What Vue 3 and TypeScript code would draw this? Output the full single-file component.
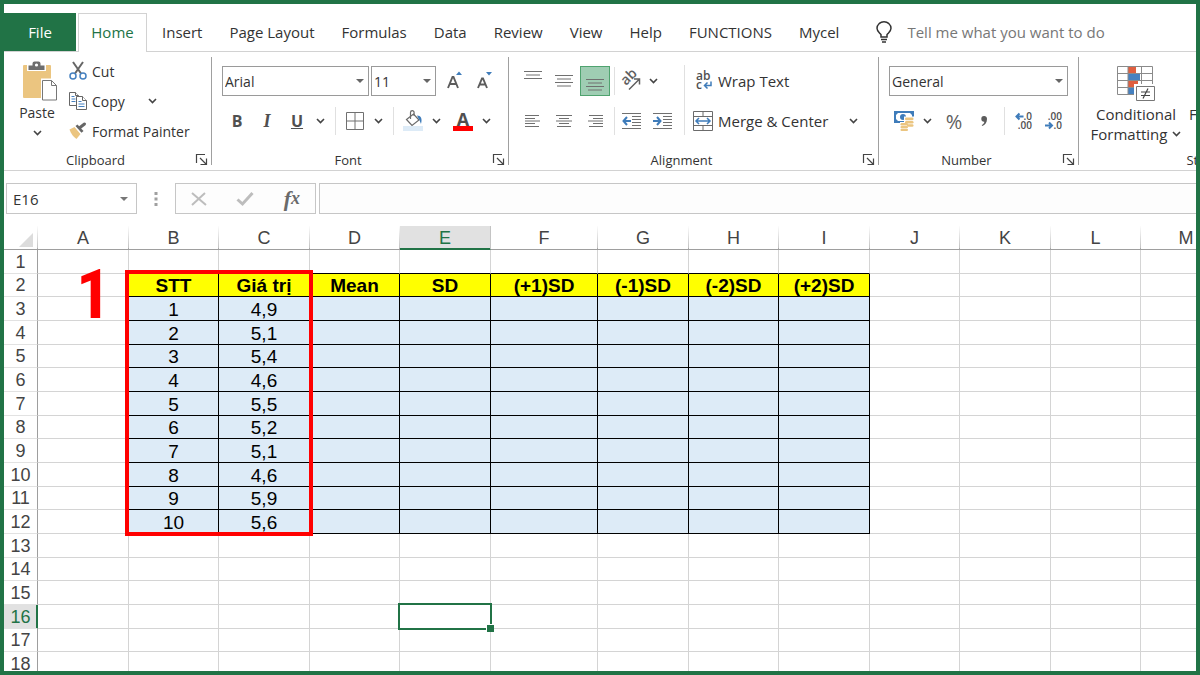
<script setup lang="ts">
import { ref } from 'vue'

const tabs = ['Insert', 'Page Layout', 'Formulas', 'Data', 'Review', 'View', 'Help', 'FUNCTIONS', 'Mycel']
const columns = ['A', 'B', 'C', 'D', 'E', 'F', 'G', 'H', 'I', 'J', 'K', 'L', 'M']
const wideColumns = ['A', 'C', 'E', 'G', 'I', 'K', 'M']
const rowCount = 18
const activeColumn = 'E'
const activeRow = 16

const headings: Record<string, string> = {
  B: 'STT', C: 'Giá trị', D: 'Mean', E: 'SD', F: '(+1)SD', G: '(-1)SD', H: '(-2)SD', I: '(+2)SD',
}
const values = ['4,9', '5,1', '5,4', '4,6', '5,5', '5,2', '5,1', '4,6', '5,9', '5,6']

const fontName = ref('Arial')
const fontSize = ref('11')
const numberFormat = ref('General')
const cellName = ref('E16')
const formula = ref('')
const query = ref('')

function inTable(col: string, row: number): boolean {
  return col in headings && row >= 2 && row <= 12
}
function cellText(col: string, row: number): string {
  if (!inTable(col, row)) return ''
  if (row === 2) return headings[col]
  if (col === 'B') return String(row - 2)
  if (col === 'C') return values[row - 3]
  return ''
}
function cellClass(col: string, row: number) {
  return {
    heading: inTable(col, row) && row === 2,
    data: inTable(col, row) && row > 2,
    'above-table': row === 1 && col in headings,
    'beside-table': col === 'A' && row >= 2 && row <= 12,
    selected: col === activeColumn && row === activeRow,
  }
}
function colClass(col: string): string {
  if (col === 'F') return 'col-f'
  return wideColumns.includes(col) ? 'col-wide' : 'col'
}
</script>

<template>
  <div class="window">
    <nav class="tabs" aria-label="Ribbon tabs">
      <button class="tab file">File</button>
      <button class="tab home">Home</button>
      <button v-for="t in tabs" :key="t" class="tab">{{ t }}</button>
      <label class="tell">
        <svg width="18" height="22" viewBox="0 0 18 22" fill="none" stroke="#333" stroke-width="1.5">
          <path d="M6 16v-2.4C4.600 11.800 2 10.500 2 7.300a7 6.500 0 0 1 14 0c0 3.200-2.600 4.500-4 6.300V16z" />
          <path d="M6 18.500h6M7 21h4" />
        </svg>
        <input v-model="query" type="text" placeholder="Tell me what you want to do" aria-label="Tell me what you want to do" />
      </label>
    </nav>

    <div class="ribbon">
      <section class="group clipboard">
        <div class="body">
          <button class="paste">
            <svg width="36" height="40" viewBox="0 0 36 40">
              <rect x="1" y="4" width="28" height="33" rx="1" fill="#ebc580" />
              <path d="M5 3.500h5a4.500 4.500 0 0 1 9 0h5V10H5z" fill="#fff" />
              <path d="M6.500 4.500H10.500V2.500a2 2 0 0 1 2-2h4a2 2 0 0 1 2 2v2h4v4.500h-16z" fill="#6d6d6d" />
              <circle cx="14.500" cy="4" r="1.600" fill="#fff" />
              <path d="M19 17.500h12l5 5V40H19z" fill="#fff" />
              <path d="M20.500 19.500h9l5 5V39h-14z" fill="#fff" stroke="#777" />
              <path d="M29.500 19.500v5h5" fill="none" stroke="#777" />
            </svg>
            <span>Paste</span>
            <svg class="chev-icon" width="9" height="6" viewBox="0 0 9 6"><path d="M1 1l3.500 3.500L8 1" /></svg>
          </button>
          <div class="clip-actions">
            <button class="action">
              <svg width="18" height="20" viewBox="0 0 18 20" fill="none">
                <path d="M4 1l8 11.500M14 1l-8 11.500" stroke="#666" stroke-width="2" />
                <circle cx="4" cy="15" r="3" stroke="#4681c0" stroke-width="1.500" />
                <circle cx="14" cy="15" r="3" stroke="#4681c0" stroke-width="1.500" />
              </svg>
              Cut
            </button>
            <div class="action-row">
              <button class="action">
                <svg width="18" height="20" viewBox="0 0 18 20" fill="#fff" stroke="#666">
                  <path d="M.5 1.500h6l3 3v10h-9z" /><path d="M6.500 1.500v3h3" />
                  <path d="M2.500 5.500h3M2.500 8h4M2.500 10.500h4" stroke="#4681c0" />
                  <path d="M7.500 5.500h6l4 4v9h-10z" /><path d="M13.500 5.500v4h4" />
                  <path d="M9.500 10.500h3M9.500 13h6M9.500 15.500h6" stroke="#4681c0" />
                </svg>
                Copy
              </button>
              <button class="chev" aria-label="Copy options"><svg class="chev-icon" width="9" height="6" viewBox="0 0 9 6"><path d="M1 1l3.500 3.500L8 1" /></svg></button>
            </div>
            <button class="action">
              <svg width="18" height="20" viewBox="0 0 18 20">
                <path d="M.5 8.500l5-2.500 6 7-4 5c-3-2-5.500-5-7-9.500z" fill="#ebc580" />
                <path d="M6.500 5l2-1.500 6 6.500-2 1.800z" fill="#666" />
                <path d="M11 6.500L15.500 3" stroke="#666" stroke-width="3" stroke-linecap="round" />
                <path d="M6 5.800l6 6.800" stroke="#fff" stroke-width=".8" />
              </svg>
              Format Painter
            </button>
          </div>
        </div>
        <footer><span>Clipboard</span><button class="launch" aria-label="Clipboard settings"><svg width="12" height="12" viewBox="0 0 12 12"><path d="M.5 9V.5H9M4 4l6 6M10.500 4.500v6h-6" /></svg></button></footer>
      </section>

      <section class="group font">
        <div class="body rows">
          <div class="row">
            <span class="select-wrap name">
              <select v-model="fontName" aria-label="Font"><option>Arial</option></select>
              <svg width="8" height="4" viewBox="0 0 8 4"><path d="M0 0h8L4 4z" /></svg>
            </span>
            <span class="select-wrap size">
              <select v-model="fontSize" aria-label="Font size"><option>11</option></select>
              <svg width="8" height="4" viewBox="0 0 8 4"><path d="M0 0h8L4 4z" /></svg>
            </span>
            <button class="tool" aria-label="Increase font size">
              <svg width="18" height="20" viewBox="0 0 18 20"><path d="M3 17l4.500-11h1L13 17M4.800 13h6.400" fill="none" stroke="#5c5c5c" stroke-width="1.900" /><path d="M11 4h6l-3-3.500z" fill="#3f7cba" /></svg>
            </button>
            <button class="tool" aria-label="Decrease font size">
              <svg width="18" height="20" viewBox="0 0 18 20"><path d="M3 17l4-9.500h1L12 17M4.600 13.500h5.800" fill="none" stroke="#5c5c5c" stroke-width="1.900" /><path d="M11 1h6l-3 3.500z" fill="#3f7cba" /></svg>
            </button>
          </div>
          <div class="row">
            <button class="tool bold">B</button>
            <button class="tool italic">I</button>
            <button class="tool under">U</button>
            <button class="chev" aria-label="Underline options"><svg class="chev-icon" width="9" height="6" viewBox="0 0 9 6"><path d="M1 1l3.500 3.500L8 1" /></svg></button>
            <i class="sep"></i>
            <button class="tool" aria-label="Borders">
              <svg width="18" height="18" viewBox="0 0 18 18" fill="none" stroke="#707070"><path d="M.5.5h17v17H.5zM9 .5v17M.5 9h17" /></svg>
            </button>
            <button class="chev" aria-label="Border options"><svg class="chev-icon" width="9" height="6" viewBox="0 0 9 6"><path d="M1 1l3.500 3.500L8 1" /></svg></button>
            <i class="sep"></i>
            <button class="tool" aria-label="Fill color">
              <svg width="20" height="22" viewBox="0 0 20 22" fill="none" stroke="#6b6b6b">
                <path d="M3.500 9.500L10.500 4l5.500 6-7 5.500z" stroke-width="1.200" />
                <path d="M7.500 9V2.500a1.800 1.800 0 0 1 3.600 0V6" stroke-width="1.200" />
                <path d="M14 5.500c4 0 5.500 3 4 8.500-1-2-1-3.500-2-4.500z" fill="#3f7cba" stroke="none" />
                <path d="M0 16h20v5H0z" fill="#ddebf7" stroke="none" />
              </svg>
            </button>
            <button class="chev" aria-label="Fill options"><svg class="chev-icon" width="9" height="6" viewBox="0 0 9 6"><path d="M1 1l3.500 3.500L8 1" /></svg></button>
            <button class="tool color" aria-label="Font color"><span>A</span></button>
            <button class="chev" aria-label="Font color options"><svg class="chev-icon" width="9" height="6" viewBox="0 0 9 6"><path d="M1 1l3.500 3.500L8 1" /></svg></button>
          </div>
        </div>
        <footer><span>Font</span><button class="launch" aria-label="Font settings"><svg width="12" height="12" viewBox="0 0 12 12"><path d="M.5 9V.5H9M4 4l6 6M10.500 4.500v6h-6" /></svg></button></footer>
      </section>

      <section class="group alignment">
        <div class="body">
          <div class="rows">
            <div class="row aligns">
              <button class="tool" aria-label="Top align"><svg class="lines" width="18" height="20" viewBox="0 0 18 20"><path d="M0 .5h18M2 4h14M0 7.500h18" /></svg></button>
              <button class="tool" aria-label="Middle align"><svg class="lines" width="18" height="20" viewBox="0 0 18 20"><path d="M0 4.500h18M2 8h14M0 11.500h18M2 15h14" /></svg></button>
              <button class="tool on" aria-label="Bottom align"><svg class="lines" width="18" height="20" viewBox="0 0 18 20"><path d="M0 8.500h18M2 12h14M0 15.500h18M2 19h14" /></svg></button>
              <i class="sep thin"></i>
              <button class="tool orient" aria-label="Orientation">
                <svg width="22" height="20" viewBox="0 0 22 20" fill="none" stroke="#606060" stroke-width="1.500">
                  <text x="0" y="0" transform="translate(7 15) rotate(-45)" class="ab">ab</text>
                  <path d="M10 18.500L20 8.500M15 8h5.500v5.500" />
                </svg>
              </button>
              <button class="chev" aria-label="Orientation options"><svg class="chev-icon" width="9" height="6" viewBox="0 0 9 6"><path d="M1 1l3.500 3.500L8 1" /></svg></button>
            </div>
            <div class="row aligns">
              <button class="tool" aria-label="Align left"><svg class="lines" width="16" height="12" viewBox="0 0 16 12"><path d="M0 .5h14M0 3.500h10M0 6h15M0 8.500h10M0 11.500h14" /></svg></button>
              <button class="tool" aria-label="Center"><svg class="lines" width="16" height="12" viewBox="0 0 16 12"><path d="M0 .5h16M3 3.500h10M0 6h16M3 8.500h10M1 11.500h14" /></svg></button>
              <button class="tool" aria-label="Align right"><svg class="lines" width="16" height="12" viewBox="0 0 16 12"><path d="M2 .5h14M6 3.500h10M1 6h15M6 8.500h10M2 11.500h14" /></svg></button>
              <i class="sep thin"></i>
              <button class="tool" aria-label="Decrease indent">
                <svg class="lines" width="19" height="18" viewBox="0 0 19 18"><path d="M0 1.500h19M10 4.500h9M10 7.500h9M10 10.500h9M10 13.500h9M0 16.500h19" /><path class="blue" d="M9 9H1.500M5 5L1.500 9 5 13" /></svg>
              </button>
              <button class="tool" aria-label="Increase indent">
                <svg class="lines" width="19" height="18" viewBox="0 0 19 18"><path d="M0 1.500h19M10 4.500h9M10 7.500h9M10 10.500h9M10 13.500h9M0 16.500h19" /><path class="blue" d="M0 9h7.500M4 5l3.500 4L4 13" /></svg>
              </button>
            </div>
          </div>
          <i class="sep tall"></i>
          <div class="rows">
            <button class="action wide">
              <svg width="20" height="20" viewBox="0 0 20 20">
                <text x="3" y="9" class="glyph">ab</text><text x="3" y="18" class="glyph">c</text>
                <path d="M18 10.500v4h-6M14.500 11.500l-3 3 3 3" fill="none" stroke="#3f7cba" stroke-width="1.500" />
              </svg>
              Wrap Text
            </button>
            <div class="row">
              <button class="action wide merge">
                <svg width="20" height="20" viewBox="0 0 20 20" fill="none" stroke="#6b6b6b">
                  <path d="M.5.500h19v19H.5zM.5 5.500h19M.5 14.500h19M10 .5v5M10 14.500v5" />
                  <path d="M3 10h14M6 7l-3 3 3 3M14 7l3 3-3 3" stroke="#3f7cba" stroke-width="1.500" />
                </svg>
                Merge &amp; Center
              </button>
              <button class="chev" aria-label="Merge options"><svg class="chev-icon" width="9" height="6" viewBox="0 0 9 6"><path d="M1 1l3.500 3.500L8 1" /></svg></button>
            </div>
          </div>
        </div>
        <footer><span>Alignment</span><button class="launch" aria-label="Alignment settings"><svg width="12" height="12" viewBox="0 0 12 12"><path d="M.5 9V.5H9M4 4l6 6M10.500 4.500v6h-6" /></svg></button></footer>
      </section>

      <section class="group number">
        <div class="body rows">
          <span class="select-wrap format">
            <select v-model="numberFormat" aria-label="Number format"><option>General</option></select>
            <svg width="8" height="4" viewBox="0 0 8 4"><path d="M0 0h8L4 4z" /></svg>
          </span>
          <div class="row">
            <button class="tool" aria-label="Accounting format">
              <svg width="20" height="20" viewBox="0 0 20 20">
                <path d="M0 0h20v12H0z" fill="#3f7cba" />
                <path d="M4 2h12l2 2v4l-2 2H4L2 8V4z" fill="#fff" />
                <circle cx="9" cy="6" r="3" fill="#3f7cba" />
                <path d="M10 5.500h10V20H6v-9h4z" fill="#fff" />
                <g fill="#ebc580">
                  <rect x="11" y="6.500" width="8.500" height="2.800" rx="1.300" /><rect x="11" y="10" width="8.500" height="2.500" rx="1.200" /><rect x="13" y="13.200" width="6.500" height="2.500" rx="1.200" />
                  <rect x="6.500" y="12" width="7.500" height="2.500" rx="1.200" /><rect x="6.500" y="15" width="7.500" height="2.300" rx="1.100" /><rect x="6.500" y="17.700" width="7.500" height="2.300" rx="1.100" />
                </g>
              </svg>
            </button>
            <button class="chev" aria-label="Accounting options"><svg class="chev-icon" width="9" height="6" viewBox="0 0 9 6"><path d="M1 1l3.500 3.500L8 1" /></svg></button>
            <button class="tool percent">%</button>
            <button class="tool comma" aria-label="Comma style">
              <svg width="8" height="12" viewBox="0 0 8 12"><path d="M4 1a2.800 2.800 0 0 1 3 3c0 3.500-2 6-4.700 7l-.6-1c1.700-.8 2.600-2 2.600-3.300A2.800 2.800 0 1 1 4 1z" fill="#5c5c5c" /></svg>
            </button>
            <i class="sep thin"></i>
            <button class="tool" aria-label="Increase decimal">
              <svg width="18" height="20" viewBox="0 0 18 20"><text x="17" y="9" class="dec">.0</text><text x="17" y="18" class="dec">.00</text><path d="M8.500 5.500h-7M4.500 2.500l-3 3 3 3" class="blue" /></svg>
            </button>
            <button class="tool" aria-label="Decrease decimal">
              <svg width="18" height="20" viewBox="0 0 18 20"><text x="17" y="9" class="dec">.00</text><text x="17" y="18" class="dec">.0</text><path d="M0 14.500h7M4 11.500l3 3-3 3" class="blue" /></svg>
            </button>
          </div>
        </div>
        <footer><span>Number</span><button class="launch" aria-label="Number settings"><svg width="12" height="12" viewBox="0 0 12 12"><path d="M.5 9V.5H9M4 4l6 6M10.500 4.500v6h-6" /></svg></button></footer>
      </section>

      <section class="group styles">
        <div class="body">
          <button class="style-btn">
            <svg width="39" height="36" viewBox="0 0 39 36">
              <path d="M.5.500h35v28H.5z" fill="#fff" />
              <path d="M11 0h8v7h-8zM11 14h10v7H11z" fill="#df5f3f" />
              <path d="M11 7h12v7H11zM11 21h6v8h-6z" fill="#4681c0" />
              <path d="M.5.500h35v28H.5zM11 .5v28M24.500.5v28M.5 7.500h35M.5 14.500h35M.5 21.500h35" fill="none" stroke="#8a8a8a" />
              <path d="M17 18h22v18H17z" fill="#fff" />
              <path d="M19.500 20.500h18v14h-18z" fill="#fff" stroke="#777" />
              <path d="M24 26h9M24 29.500h9M31 22.500l-5 10" fill="none" stroke="#444" stroke-width="1.200" />
            </svg>
            <span>Conditional</span>
            <span>Formatting <svg class="chev-icon" width="9" height="6" viewBox="0 0 9 6"><path d="M1 1l3.500 3.500L8 1" /></svg></span>
          </button>
          <button class="style-btn second"><span>Format as</span><span>Table</span></button>
        </div>
        <footer><span>Styles</span></footer>
      </section>
    </div>

    <div class="formula-bar">
      <div class="name-box">
        <input v-model="cellName" type="text" aria-label="Name box" />
        <button aria-label="Show names"><svg width="8" height="4" viewBox="0 0 8 4"><path d="M0 0h8L4 4z" /></svg></button>
      </div>
      <svg class="dots" width="4" height="14" viewBox="0 0 4 14"><path d="M.5 0h3v3h-3zM.5 5.500h3v3h-3zM.5 11h3v3h-3z" fill="#a0a0a0" /></svg>
      <div class="fx-box">
        <button aria-label="Cancel"><svg width="16" height="14" viewBox="0 0 16 14" fill="none" stroke="#bdbdbd" stroke-width="2"><path d="M1 1l14 12M14 1L1 13" /></svg></button>
        <button aria-label="Enter"><svg width="18" height="14" viewBox="0 0 18 14" fill="none" stroke="#bdbdbd" stroke-width="3"><path d="M1.500 7.500l5 4.500L16.500 1" /></svg></button>
        <button class="fx" aria-label="Insert function">f<small>x</small></button>
      </div>
      <input v-model="formula" class="formula" type="text" aria-label="Formula" />
    </div>

    <main class="sheet">
      <table>
        <colgroup>
          <col class="col-head" />
          <col v-for="c in columns" :key="c" :class="colClass(c)" />
        </colgroup>
        <thead>
          <tr>
            <th class="corner"><svg width="14" height="14" viewBox="0 0 14 14"><path d="M14 0v14H0z" fill="#dcdcdc" /></svg></th>
            <th v-for="c in columns" :key="c" scope="col" :class="{ active: c === activeColumn }">{{ c }}</th>
          </tr>
        </thead>
        <tbody>
          <tr v-for="r in rowCount" :key="r">
            <th scope="row" :class="{ active: r === activeRow }">{{ r }}</th>
            <td v-for="c in columns" :key="c" :class="cellClass(c, r)">{{ cellText(c, r) }}</td>
          </tr>
        </tbody>
      </table>
      <div class="callout-box"></div>
      <strong class="callout-number">1</strong>
    </main>
  </div>
</template>

<style>
body { margin: 0; }
</style>

<style scoped>
* { box-sizing: border-box; }
.window {
  display: flex; flex-direction: column; height: 100vh; overflow: hidden;
  border: 4px solid #217346; background: #fff; color: #333;
  font-family: "Open Sans", "Noto Sans", sans-serif; font-size: 15px;
}
button, input, select { font: inherit; color: inherit; margin: 0; padding: 0; border: 0; background: none; border-radius: 0; }
button { display: flex; align-items: center; justify-content: center; white-space: nowrap; flex: none; }
svg { display: block; flex: none; overflow: visible; }
.chev-icon { fill: none; stroke: #444; stroke-width: 1.6; }

.tabs { display: flex; flex: none; gap: 1px; height: 48px; padding-top: 9px; border-bottom: 1px solid #d2d2d2; }
.tab { padding: 0 13px 1px; }
.file { width: 72px; background: #217346; color: #fff; }
.home { width: 69px; height: 39px; margin: 0 1px; border: 1px solid #d2d2d2; border-bottom: 0; padding-bottom: 2px; background: #fff; color: #217346; }
.tell { display: flex; align-items: center; flex: 1; gap: 14px; padding-left: 22px; }
.tell input { flex: 1; min-width: 0; outline: 0; }
.tell input::placeholder { color: #777; opacity: 1; }

.ribbon { display: flex; flex: none; padding: 5px 0; border-bottom: 1px solid #d2d2d2; overflow: hidden; }
.group { display: flex; flex-direction: column; flex: none; height: 108px; border-right: 1px solid #a0a0a0; }
.clipboard { width: 208px; font-size: 14px; }
.font { width: 297px; }
.alignment { width: 370px; }
.number { width: 200px; }
.styles { width: 262px; border: 0; }
.body { display: flex; flex: 1; min-height: 0; }
footer { display: flex; align-items: center; height: 10px; padding-right: 3px; font-size: 13px; line-height: 10px; }
footer span { flex: 1; text-align: center; padding-right: 9px; }
.launch svg { fill: none; stroke: #444; stroke-width: 1.2; }

.paste { flex-direction: column; justify-content: flex-start; width: 42px; margin: 4px 5px 0 12px; line-height: 24px; }
.paste svg:first-child { align-self: flex-end; }
.paste .chev-icon { margin-top: 5px; }
.clip-actions { display: flex; flex-direction: column; align-items: flex-start; gap: 2px; padding-left: 6px; }
.action { height: 30px; gap: 5px; justify-content: flex-start; }
.clip-actions .action, .clip-actions .chev { height: 28px; }
.action-row { display: flex; gap: 20px; }
.chev { width: 16px; height: 30px; }

.rows { display: flex; flex-direction: column; gap: 10px; padding-top: 9px; }
.row { display: flex; align-items: center; height: 30px; }
.font .rows, .number .rows { padding-left: 10px; }
.tool { width: 30px; height: 30px; }
.select-wrap { display: grid; align-items: center; height: 30px; border: 1px solid #9a9a9a; font-size: 14px; }
.select-wrap > * { grid-area: 1 / 1; }
.select-wrap svg { justify-self: end; margin-right: 4px; fill: #666; pointer-events: none; }
.select-wrap select { appearance: none; width: 100%; height: 28px; padding-left: 2px; outline: 0; }
.name { width: 147px; margin-right: 2px; }
.size { width: 65px; margin-right: 3px; }
.format { width: 179px; }
.bold, .under { font-size: 16px; font-weight: 700; color: #505050; }
.under { text-decoration: underline; }
.italic { font: italic 700 18px "Liberation Serif", serif; color: #505050; }
.color { flex-direction: column; font-size: 18px; font-weight: 700; color: #505050; }
.color span { width: 20px; height: 20px; line-height: 16px; border-bottom: 5px solid #f00; }
.chev + .color { margin-left: 4px; }
.sep { flex: none; width: 1px; height: 28px; margin: 0 4px 0 7px; background: #e0e0e0; }
.sep.thin { margin: 0 0 0 3px; }
.number .sep.thin { margin: 0 4px 0 5px; }
.sep.tall { height: 70px; margin: 8px 8px 0 7px; }
.alignment .body { padding-left: 9px; }
.aligns { gap: 1px; }
.orient { width: 28px; }
.lines { fill: none; stroke: #707070; }
.blue { fill: none; stroke: #3f7cba; stroke-width: 2; }
.on { background: #9fcdb3; border: 1px solid #4fa36f; }
.ab { font-size: 14px; font-weight: 600; fill: #606060; stroke: none; }
.glyph { font-size: 12px; font-weight: 600; fill: #505050; }
.dec { font-size: 10px; font-weight: 600; fill: #505050; text-anchor: end; }
.wide { gap: 5px; }
.merge { width: 152px; }
.percent { font-size: 20px; margin-left: 4px; color: #606060; }
.style-btn { flex-direction: column; justify-content: flex-start; width: 100px; padding-top: 9px; margin-left: 7px; line-height: 20px; }
.style-btn > svg { margin-bottom: 2px; }
.style-btn span { display: flex; align-items: center; gap: 5px; }
.second { width: 72px; margin-left: 2px; padding-top: 47px; }

.formula-bar { display: flex; align-items: center; flex: none; height: 55px; padding-left: 2px; }
.name-box { display: flex; width: 131px; height: 31px; border: 1px solid #c6c6c6; }
.name-box input { flex: 1; min-width: 0; padding-left: 6px; outline: 0; }
.name-box button { width: 24px; fill: #777; }
.dots { margin: 0 17px; }
.fx-box { display: flex; align-items: center; width: 141px; height: 31px; border: 1px solid #c6c6c6; background: #fdfdfd; }
.fx-box button { flex: 1; }
.fx { font: italic 700 22px "Liberation Serif", serif; color: #6a6a6a; }
.fx small { font-size: 18px; }
.formula { flex: 1; min-width: 0; height: 31px; margin-left: 3px; padding: 0 8px; border: 1px solid #c6c6c6; border-right: 0; background: #fdfdfd; outline: 0; }

.sheet { position: relative; flex: 1; min-height: 0; overflow: hidden; font-family: "Liberation Sans", Arial, sans-serif; font-size: 19px; }
table { table-layout: fixed; width: 0; border-collapse: separate; border-spacing: 0; }
.col-head { width: 34px; }
.col { width: 90px; }
.col-wide { width: 91px; }
.col-f { width: 107px; }
tr { height: 24px; }
tbody tr:nth-child(3n + 2) { height: 23px; }
th, td { padding: 0; border-right: 1px solid #d4d4d4; border-bottom: 1px solid #d4d4d4; text-align: center; line-height: 22px; white-space: nowrap; color: #000; }
th { font-weight: 400; color: #444; font-size: 18px; }
td { padding-top: 1px; line-height: 21px; }
thead th { padding-top: 1px; border-bottom-color: #9e9e9e; border-right: 1px solid; border-image: linear-gradient(#fff, #c4c4c4 90%, #9e9e9e 96%) 1; }
tbody th { border-right-color: #9e9e9e; border-bottom-color: #e2e2e2; }
.corner svg { margin: 3px 0 0 15px; }
thead th.active { background: #e1e1e1; color: #217346; border-image: none; border-right-color: #c4c4c4; border-bottom-color: #217346; box-shadow: inset 0 -1px #217346; }
tbody th.active { background: #e1e1e1; color: #217346; box-shadow: inset -1px 0 #217346; border-right-color: #217346; }
.heading { background: #ff0; font-weight: 700; border-color: #000; }
.data { background: #ddebf7; border-color: #000; }
.above-table { border-bottom-color: #000; }
.beside-table { border-right-color: #000; }
.selected { position: relative; }
.selected::before { content: ""; position: absolute; inset: -2px; border: 2px solid #217346; }
.selected::after { content: ""; position: absolute; right: -4px; bottom: -4px; width: 7px; height: 7px; border: solid #fff; border-width: 1px 0 0 1px; background: #217346; }
.callout-box { position: absolute; left: 121px; top: 44px; width: 188px; height: 266px; border: 4px solid #f00; }
.callout-number { position: absolute; left: 72px; top: 34px; color: #f00; font: 700 69px/69px "Liberation Sans Narrow", "Roboto Condensed", Roboto, sans-serif; }
</style>
